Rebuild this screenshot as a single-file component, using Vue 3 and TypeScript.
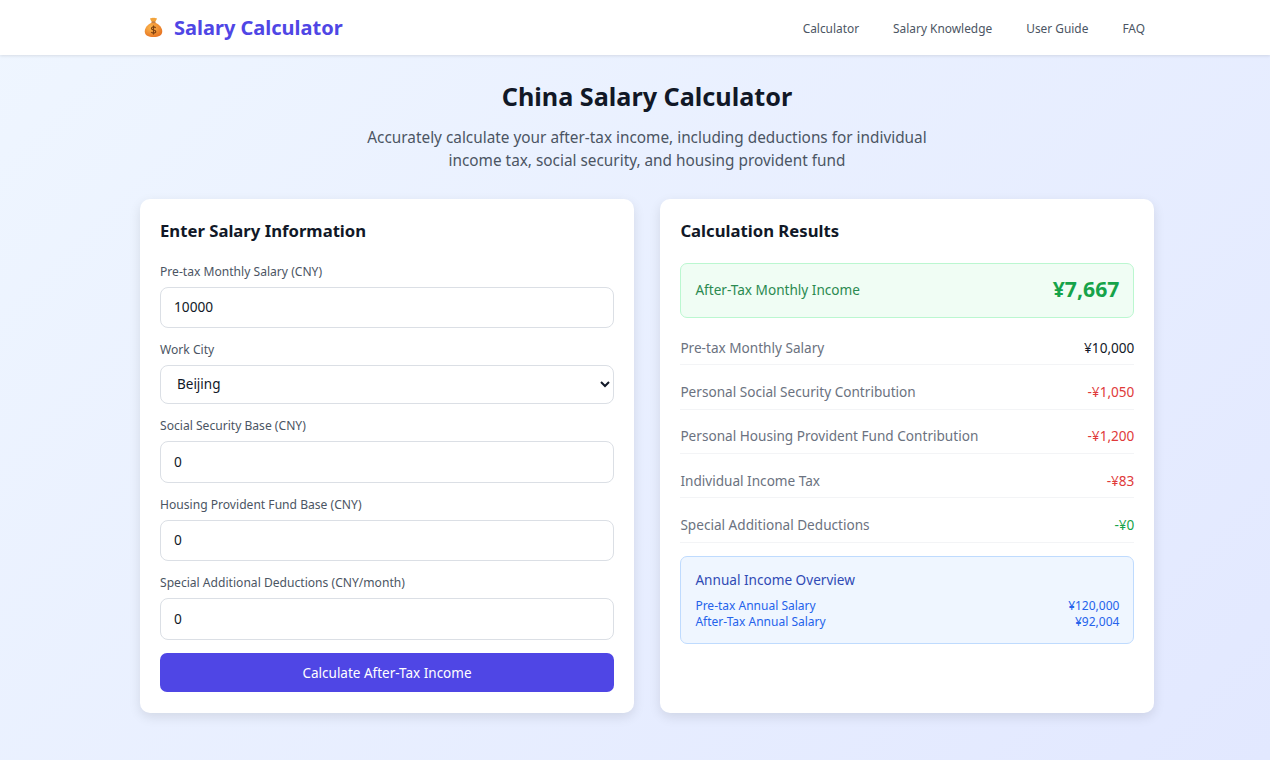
<template>
  <div class="page">
    <header class="topbar">
      <div class="topbar-inner">
        <div class="logo">
          <svg class="logo-icon" viewBox="0 0 20 22" width="19" height="21" aria-hidden="true">
            <defs>
              <radialGradient id="bag" cx="38%" cy="35%" r="75%">
                <stop offset="0%" stop-color="#fcb94f" />
                <stop offset="100%" stop-color="#e56f20" />
              </radialGradient>
            </defs>
            <path d="M6.500 1c1 .8 2.400-.6 3.500 0 1.100-.6 2.500.8 3.500 0 .3 1.500-1 3-1.800 4H8.300C7.500 4 6.200 2.500 6.500 1z" fill="#f2a33a" />
            <path d="M7.900 6C4 7.800.8 11 .8 15.200c0 4 3.700 5.800 9.200 5.800s9.200-1.800 9.200-5.800c0-4.200-3.200-7.400-7.100-9.200z" fill="url(#bag)" />
            <rect x="7.800" y="4.700" width="4.400" height="1.300" rx=".6" fill="#b5601c" />
            <path d="M12.300 11.400c-.5-.7-1.300-1-2.300-1-1.300 0-2.200.7-2.200 1.600 0 2.200 4.600 1.100 4.600 3.300 0 1-1 1.600-2.400 1.600-1 0-1.900-.3-2.400-1.100M10 9v9.400" fill="none" stroke="#7c3f12" stroke-width="1.200" />
          </svg>
          <span class="logo-text">Salary Calculator</span>
        </div>
        <nav class="nav">
          <a v-for="link in navLinks" :key="link" href="#">{{ link }}</a>
        </nav>
      </div>
    </header>

    <main class="main">
      <section class="hero">
        <h1>China Salary Calculator</h1>
        <p>Accurately calculate your after-tax income, including deductions for individual income tax, social security, and housing provident fund</p>
      </section>

      <div class="columns">
        <form class="card" @submit.prevent>
          <h2>Enter Salary Information</h2>
          <div class="field">
            <label>Pre-tax Monthly Salary (CNY)</label>
            <input v-model="form.salary" type="text" />
          </div>
          <div class="field">
            <label>Work City</label>
            <select v-model="form.city">
              <option>Beijing</option>
              <option>Shanghai</option>
              <option>Guangzhou</option>
              <option>Shenzhen</option>
            </select>
          </div>
          <div class="field">
            <label>Social Security Base (CNY)</label>
            <input v-model="form.socialBase" type="text" />
          </div>
          <div class="field">
            <label>Housing Provident Fund Base (CNY)</label>
            <input v-model="form.fundBase" type="text" />
          </div>
          <div class="field">
            <label>Special Additional Deductions (CNY/month)</label>
            <input v-model="form.deductions" type="text" />
          </div>
          <button class="submit" type="submit">Calculate After-Tax Income</button>
        </form>

        <section class="card">
          <h2>Calculation Results</h2>
          <div class="net">
            <span>After-Tax Monthly Income</span>
            <strong>¥7,667</strong>
          </div>
          <div class="rows">
            <div v-for="row in rows" :key="row.label" class="row">
              <span>{{ row.label }}</span>
              <span :class="row.kind">{{ row.value }}</span>
            </div>
          </div>
          <div class="annual">
            <h3>Annual Income Overview</h3>
            <div class="annual-row">
              <span>Pre-tax Annual Salary</span>
              <span>¥120,000</span>
            </div>
            <div class="annual-row">
              <span>After-Tax Annual Salary</span>
              <span>¥92,004</span>
            </div>
          </div>
        </section>
      </div>
    </main>
  </div>
</template>

<script setup lang="ts">
import { reactive } from 'vue';

interface ResultRow {
  label: string;
  value: string;
  kind: 'plain' | 'minus' | 'plus';
}

const navLinks = ['Calculator', 'Salary Knowledge', 'User Guide', 'FAQ'];

const form = reactive({
  salary: '10000',
  city: 'Beijing',
  socialBase: '0',
  fundBase: '0',
  deductions: '0'
});

const rows: ResultRow[] = [
  { label: 'Pre-tax Monthly Salary', value: '¥10,000', kind: 'plain' },
  { label: 'Personal Social Security Contribution', value: '-¥1,050', kind: 'minus' },
  { label: 'Personal Housing Provident Fund Contribution', value: '-¥1,200', kind: 'minus' },
  { label: 'Individual Income Tax', value: '-¥83', kind: 'minus' },
  { label: 'Special Additional Deductions', value: '-¥0', kind: 'plus' }
];
</script>

<style>
html, body {
  margin: 0;
  padding: 0;
}
</style>

<style scoped>
* {
  box-sizing: border-box;
}

.page {
  height: 760px;
  overflow: hidden;
  background: linear-gradient(135deg, #eff6ff 0%, #e2e8ff 100%);
  font-family: "Noto Sans", "Open Sans", sans-serif;
  color: #111827;
}

.topbar {
  height: 55px;
  background: #fff;
  box-shadow: 0 1px 3px rgba(0, 0, 0, 0.1);
}

.topbar-inner {
  width: 1014px;
  margin-left: 140px;
  height: 100%;
  padding: 0 9px 0 4px;
  display: flex;
  align-items: center;
  justify-content: space-between;
}

.logo {
  display: flex;
  align-items: center;
  gap: 11px;
}

.logo-text {
  font-size: 20px;
  font-weight: 700;
  color: #4f46e5;
}

.nav {
  display: flex;
  gap: 34px;
  padding-top: 1px;
}

.nav a {
  font-size: 11.900px;
  color: #4b5563;
  text-decoration: none;
}

.main {
  width: 1014px;
  margin-left: 140px;
}

.hero {
  text-align: center;
  padding-top: 21px;
}

.hero h1 {
  margin: 0;
  font-size: 25.200px;
  line-height: 40px;
  font-weight: 700;
}

.hero p {
  width: 600px;
  margin: 10px auto 0;
  font-size: 15.350px;
  line-height: 23px;
  color: #4b5563;
}

.columns {
  display: grid;
  grid-template-columns: 494px 494px;
  gap: 26.400px;
  margin-top: 27px;
}

.card {
  height: 514px;
  padding: 20px;
  background: #fff;
  border-radius: 10px;
  box-shadow: 0 4px 12px rgba(0, 0, 0, 0.1);
}

.card h2 {
  margin: 0 0 19.800px;
  font-size: 16.700px;
  line-height: 24px;
  font-weight: 700;
}

.field {
  margin-bottom: 13px;
}

.field label {
  display: block;
  margin-bottom: 7px;
  padding-top: 1px;
  font-size: 12.100px;
  line-height: 16px;
  color: #4b5563;
}

.field input,
.field select {
  display: block;
  width: 100%;
  height: 41.500px;
  padding: 0 13px 2px;
  border: 1px solid #dbdfe5;
  border-radius: 8px;
  background: #fff;
  font-family: inherit;
  font-size: 13.700px;
  color: #111827;
  outline: none;
}

.field select {
  height: 39px;
  padding: 0 12px 2px;
  font-size: 13.500px;
}

.submit {
  display: block;
  width: 100%;
  height: 39.500px;
  border: 0;
  border-radius: 7px;
  background: #4f46e5;
  color: #fff;
  font-family: inherit;
  font-size: 13.500px;
}

.net {
  height: 55px;
  margin-top: 0.200px;
  padding: 0 14px 2px;
  display: flex;
  align-items: center;
  justify-content: space-between;
  background: #f0fdf4;
  border: 1px solid #bbf7d0;
  border-radius: 7px;
  font-size: 13.600px;
  color: #2b8a50;
}

.net strong {
  margin-bottom: 1px;
  font-size: 21.200px;
  font-weight: 700;
  color: #16a34a;
}

.rows {
  margin-top: 3.300px;
}

.row {
  height: 44.300px;
  padding-top: 16.800px;
  display: flex;
  align-items: flex-start;
  justify-content: space-between;
  border-bottom: 1px solid #f3f4f6;
  font-size: 13.600px;
  line-height: 20px;
  color: #6b7280;
}

.row .plain {
  color: #111827;
}

.row .minus {
  color: #e03a3a;
}

.row .plus {
  color: #16a34a;
}

.annual {
  margin-top: 13px;
  padding: 13px 14px 12px;
  background: #eff6ff;
  border: 1px solid #bfdbfe;
  border-radius: 7px;
}

.annual h3 {
  margin: 0 0 8px;
  font-size: 13.600px;
  line-height: 20px;
  font-weight: 400;
  color: #2f4bb5;
}

.annual-row {
  display: flex;
  justify-content: space-between;
  font-size: 12px;
  line-height: 16.500px;
  color: #2563eb;
}
</style>
